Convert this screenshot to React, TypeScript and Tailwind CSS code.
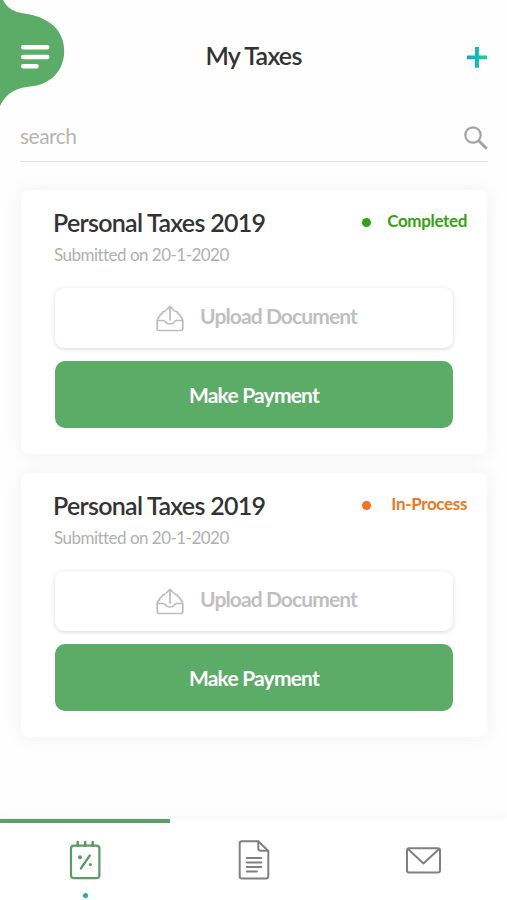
import { useState } from "react";

type Tax = {
  id: number;
  title: string;
  submitted: string;
  status: "Completed" | "In-Process";
};

const taxes: Tax[] = [
  {
    id: 1,
    title: "Personal Taxes 2019",
    submitted: "20-1-2020",
    status: "Completed",
  },
  {
    id: 2,
    title: "Personal Taxes 2019",
    submitted: "20-1-2020",
    status: "In-Process",
  },
];

function MenuBlob() {
  return (
    <svg width="65" height="107" viewBox="0 0 65 107" className="block">
      <path
        d="M0 0H3C7 8 14 12 24 13.500C50 17 64.200 31 64.200 51C64.200 71 50 84.500 32 86.200C16 87.500 6 93 0 106Z"
        fill="#5aac66"
      />
      <g stroke="#fff" strokeWidth="4.400" strokeLinecap="round">
        <path d="M23.200 47.300H47.300M23.200 57H47.300M23.200 66.300H36.600" />
      </g>
    </svg>
  );
}

function PlusIcon() {
  return (
    <svg width="20" height="21" viewBox="0 0 20 21">
      <defs>
        <linearGradient id="plus" x1="0" y1="0" x2="1" y2="0">
          <stop offset="0" stopColor="#1d9fc4" />
          <stop offset="0.5" stopColor="#0cc0b8" />
          <stop offset="1" stopColor="#2fcb8b" />
        </linearGradient>
      </defs>
      <path
        d="M8 0H12V8.500H20V12.300H12V20.700H8V12.300H0V8.500H8Z"
        fill="url(#plus)"
      />
    </svg>
  );
}

function SearchIcon() {
  return (
    <svg width="24" height="24" viewBox="0 0 24 24" fill="none" stroke="#a3a3a3">
      <circle cx="9" cy="9" r="7.700" strokeWidth="2.200" />
      <path d="M14.500 14.500L22.800 22.800" strokeWidth="3" />
    </svg>
  );
}

function UploadIcon() {
  return (
    <svg
      width="28"
      height="27"
      viewBox="0 0 28 27"
      fill="none"
      stroke="#bcbcbc"
      strokeWidth="1.700"
      strokeLinecap="round"
      strokeLinejoin="round"
    >
      <path d="M14 15V1.500M10.300 5L14 1.300L17.700 5" />
      <path d="M9 6.200C7 6.500 6.300 7 6 8.700C4.500 9 3.700 10 3.500 11.500C2 12.700 1.200 14 1.200 16V24Q1.200 25.500 2.700 25.500H25.300Q26.800 25.500 26.800 24V16C26.800 14 26 12.700 24.500 11.500C24.300 10 23.500 9 22 8.700C21.700 7 21 6.500 19 6.200" />
      <path d="M1.500 15.500H7.500C9 15.500 9.300 16.500 10 17.500C11 18.800 12 19 14 19C16 19 17 18.800 18 17.500C18.700 16.500 19 15.500 20.500 15.500H26.500" />
    </svg>
  );
}

function TaxIcon() {
  return (
    <svg width="32" height="40" viewBox="0 0 32 40" fill="none" stroke="#5a9a67">
      <rect x="2" y="5.700" width="28.400" height="32.500" rx="3" strokeWidth="2.200" />
      <path
        d="M8.700 5V2M16.200 5V2M23.700 5V2M8.200 5.500H9.200M15.700 5.500H16.700M23.200 5.500H24.200"
        strokeWidth="2.500"
        strokeLinecap="round"
      />
      <path d="M20.800 15.500L11.800 28.500" strokeWidth="2.200" strokeLinecap="round" />
      <circle cx="11" cy="17.300" r="2" fill="#5a9a67" stroke="none" />
      <circle cx="21.300" cy="24.500" r="1.500" fill="#5a9a67" stroke="none" />
    </svg>
  );
}

function DocumentIcon() {
  return (
    <svg
      width="32"
      height="40"
      viewBox="0 0 32 40"
      fill="none"
      stroke="#808080"
      strokeWidth="2"
      strokeLinecap="round"
      strokeLinejoin="round"
    >
      <path d="M20.300 1.200H4Q1.700 1.200 1.700 3.500V36.200Q1.700 38.500 4 38.500H28Q30.300 38.500 30.300 36.200V11Z" />
      <path d="M20.300 1.500V8.500Q20.300 10.800 22.600 10.800H30" />
      <path d="M8.800 18H23.300M8.800 22.500H23.300M8.800 27H23.300M8.800 31.500H18.800" />
    </svg>
  );
}

function MailIcon() {
  return (
    <svg
      width="36"
      height="27"
      viewBox="0 0 36 27"
      fill="none"
      stroke="#808080"
      strokeWidth="2"
      strokeLinejoin="round"
    >
      <rect x="2" y="1.200" width="33" height="24.300" rx="2" />
      <path d="M3 2L18.500 16.500L34 2" />
    </svg>
  );
}

function TaxCard({ tax }: { tax: Tax }) {
  const done = tax.status === "Completed";

  return (
    <div className="h-[264px] rounded-lg bg-white pl-8 pr-5 pt-4 shadow-[0_0_20px_rgba(0,0,0,0.06)]">
      <div className="flex justify-between">
        <h2 className="text-[25px] leading-8 font-semibold tracking-[-0.700px] text-[#333]">
          {tax.title}
        </h2>
        <div
          className={`mt-px flex h-7 items-center ${done ? "text-[#34a312]" : "text-[#ec7623]"}`}
        >
          <span
            className={`mt-0.5 size-[9px] rounded-full bg-current ${done ? "mr-4" : "mr-5"}`}
          />
          <span className="text-[17px] font-bold tracking-[-0.350px]">
            {tax.status}
          </span>
        </div>
      </div>
      <p className="mt-[5px] pl-px text-[17px] leading-6 tracking-[-0.520px] text-[#b0b0b0]">
        Submitted on {tax.submitted}
      </p>
      <div className="mr-3.5 ml-0.5 flex flex-col gap-[13px] pt-[21px]">
        <button className="flex h-[60px] items-center justify-center rounded-[9px] bg-white pl-[5px] shadow-[0_1px_4px_rgba(0,0,0,0.160)]">
          <UploadIcon />
          <span className="-mt-1 ml-4 text-[21px] font-bold tracking-[-0.900px] text-[#bfbfbf]">
            Upload Document
          </span>
        </button>
        <button className="h-[67px] rounded-[10px] bg-[#5aac66] text-[21px] font-bold tracking-[-0.800px] text-white">
          Make Payment
        </button>
      </div>
    </div>
  );
}

function App() {
  const [activeTab, setActiveTab] = useState("taxes");

  const tabs = [
    { name: "taxes", icon: <TaxIcon /> },
    { name: "documents", icon: <DocumentIcon /> },
    { name: "messages", icon: <MailIcon /> },
  ];

  return (
    <div className="flex h-[900px] w-[507px] flex-col overflow-hidden bg-[#fefefe] font-['Lato',sans-serif]">
      <header className="flex h-[107px] shrink-0 justify-between pr-5">
        <button>
          <MenuBlob />
        </button>
        <h1 className="mt-[39px] ml-[-25px] text-[25px] leading-8 font-semibold tracking-[-0.750px] text-[#333]">
          My Taxes
        </h1>
        <button className="mt-[47px] h-[21px]">
          <PlusIcon />
        </button>
      </header>

      <div className="mr-[19px] ml-5 flex h-[55px] shrink-0 items-center justify-between border-b-[1.500px] border-[#dedede] pt-[7px]">
        <input
          placeholder="search"
          className="w-80 pb-1 text-[21px] tracking-[-0.500px] text-[#333] outline-none placeholder:text-[#b5b5b5]"
        />
        <SearchIcon />
      </div>

      <main className="flex flex-1 flex-col gap-[19px] pt-7 pr-5 pl-[21px]">
        {taxes.map((tax) => (
          <TaxCard key={tax.id} tax={tax} />
        ))}
      </main>

      <nav className="grid h-[81px] shrink-0 grid-cols-[170px_168px_169px] bg-white shadow-[0_-2px_12px_rgba(0,0,0,0.030)]">
        {tabs.map((tab) => (
          <button
            key={tab.name}
            onClick={() => setActiveTab(tab.name)}
            className={`flex flex-col items-center border-t-4 ${
              activeTab === tab.name ? "border-[#5a9f68]" : "border-transparent"
            }`}
          >
            <span className="flex h-[74px] items-center">{tab.icon}</span>
            {activeTab === tab.name && (
              <span className="-mt-1 size-[5px] shrink-0 rounded-full bg-[#2aa5b5]" />
            )}
          </button>
        ))}
      </nav>
    </div>
  );
}

export default App;
